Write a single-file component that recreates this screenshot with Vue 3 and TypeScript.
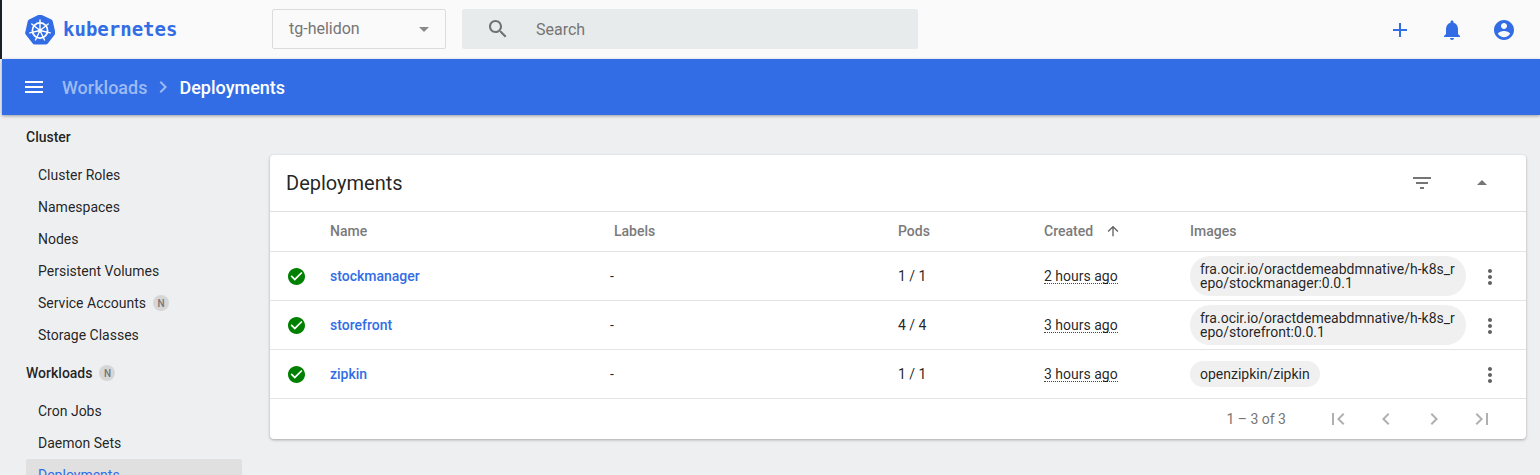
<script setup lang="ts">
interface Row { name: string; pods: string; age: string; image: string }
const cluster: { label: string; badge?: boolean }[] = [
  { label: 'Cluster Roles' }, { label: 'Namespaces' }, { label: 'Nodes' },
  { label: 'Persistent Volumes' }, { label: 'Service Accounts', badge: true }, { label: 'Storage Classes' },
]
const workloads = ['Cron Jobs', 'Daemon Sets']
const rows: Row[] = [
  { name: 'stockmanager', pods: '1 / 1', age: '2 hours ago', image: 'fra.ocir.io/oractdemeabdmnative/h-k8s_repo/stockmanager:0.0.1' },
  { name: 'storefront', pods: '4 / 4', age: '3 hours ago', image: 'fra.ocir.io/oractdemeabdmnative/h-k8s_repo/storefront:0.0.1' },
  { name: 'zipkin', pods: '1 / 1', age: '3 hours ago', image: 'openzipkin/zipkin' },
]
const pager = [
  'M18.41 16.59L13.82 12l4.59-4.59L17 6l-6 6 6 6zM6 6h2v12H6z',
  'M15.41 7.41L14 6l-6 6 6 6 1.41-1.41L10.83 12z',
  'M10 6L8.59 7.41 13.17 12l-4.58 4.59L10 18l6-6z',
  'M5.59 7.41L10.18 12l-4.59 4.59L7 18l6-6-6-6zM16 6h2v12h-2z',
]
const spokes = [0, 51.4, 102.8, 154.3, 205.7, 257.1, 308.6]
</script>

<template>
  <div class="page">
    <header class="toolbar">
      <div class="brand">
        <svg class="logo" width="30" height="30" viewBox="0 0 30 30">
          <path d="M15 .4a2.6 2.6 0 0 1 1.2.3l10.2 4.9a2.6 2.6 0 0 1 1.4 1.8l2.5 11a2.6 2.6 0 0 1-.5 2.2l-7 8.8a2.6 2.6 0 0 1-2 1H9.7a2.6 2.6 0 0 1-2-1l-7-8.8a2.6 2.6 0 0 1-.5-2.2l2.5-11a2.6 2.6 0 0 1 1.4-1.8L13.8.7A2.6 2.6 0 0 1 15 .4z" fill="#326de6" transform="translate(0 -1)" />
          <circle cx="15" cy="15.5" r="7.6" fill="none" stroke="#fff" stroke-width="1.7" />
          <circle cx="15" cy="15.5" r="1.9" fill="#fff" />
          <g stroke="#fff" stroke-width="1.4" stroke-linecap="round">
            <line v-for="a in spokes" :key="a" x1="15" y1="15.5" x2="15" y2="5" :transform="`rotate(${a} 15 15.5)`" />
          </g>
        </svg>
        <span class="wordmark">kubernetes</span>
      </div>
      <div class="select">
        <span>tg-helidon</span>
        <svg width="24" height="24" viewBox="0 0 24 24"><path d="M7 10l5 5 5-5z" fill="#8a8a8a" /></svg>
      </div>
      <div class="search">
        <svg width="24" height="24" viewBox="0 0 24 24"><path d="M15.5 14h-.79l-.28-.27C15.41 12.59 16 11.11 16 9.5 16 5.91 13.09 3 9.5 3S3 5.91 3 9.5 5.91 16 9.5 16c1.61 0 3.09-.59 4.23-1.57l.27.28v.79l5 4.99L20.49 19l-4.99-5zm-6 0C7.01 14 5 11.99 5 9.5S7.01 5 9.5 5 14 7.01 14 9.5 11.99 14 9.5 14z" fill="#6f7172" /></svg>
        <span>Search</span>
      </div>
      <div class="actions">
        <svg width="24" height="24" viewBox="0 0 24 24"><path d="M19 13h-6v6h-2v-6H5v-2h6V5h2v6h6v2z" /></svg>
        <svg width="24" height="24" viewBox="0 0 24 24"><path d="M12 22c1.1 0 2-.9 2-2h-4c0 1.1.89 2 2 2zm6-6v-5c0-3.07-1.64-5.64-4.5-6.32V4c0-.83-.67-1.5-1.5-1.5s-1.5.67-1.5 1.5v.68C7.63 5.36 6 7.92 6 11v5l-2 2v1h16v-1l-2-2z" /></svg>
        <svg width="24" height="24" viewBox="0 0 24 24"><path d="M12 2C6.48 2 2 6.48 2 12s4.48 10 10 10 10-4.48 10-10S17.52 2 12 2zm0 3c1.66 0 3 1.34 3 3s-1.34 3-3 3-3-1.34-3-3 1.34-3 3-3zm0 14.2c-2.5 0-4.71-1.28-6-3.22.03-1.99 4-3.08 6-3.08 1.99 0 5.97 1.09 6 3.08-1.29 1.94-3.5 3.22-6 3.22z" /></svg>
      </div>
    </header>

    <div class="bar">
      <svg width="24" height="24" viewBox="0 0 24 24"><path d="M3 18h18v-2H3v2zm0-5h18v-2H3v2zm0-7v2h18V6H3z" fill="#fff" /></svg>
      <span class="crumb">Workloads</span>
      <svg class="sep" width="24" height="24" viewBox="0 0 24 24"><path d="M10 6L8.59 7.41 13.17 12l-4.58 4.59L10 18l6-6z" fill="#9dbaf3" /></svg>
      <span class="current">Deployments</span>
    </div>

    <div class="main">
      <nav class="side">
        <div class="group first">Cluster</div>
        <div v-for="c in cluster" :key="c.label" class="item">
          {{ c.label }}<span v-if="c.badge" class="badge">N</span>
        </div>
        <div class="group">Workloads<span class="badge">N</span></div>
        <div v-for="w in workloads" :key="w" class="item">{{ w }}</div>
        <div class="item active">Deployments</div>
      </nav>

      <section class="card">
        <div class="card-head">
          <span class="card-title">Deployments</span>
          <svg class="filter" width="24" height="24" viewBox="0 0 24 24"><path d="M10 18h4v-2h-4v2zM3 6v2h18V6H3zm3 7h12v-2H6v2z" /></svg>
          <svg class="collapse" width="24" height="24" viewBox="0 0 24 24"><path d="M7 14l5-5 5 5z" /></svg>
        </div>
        <div class="grid head">
          <span></span>
          <span>Name</span>
          <span>Labels</span>
          <span>Pods</span>
          <span class="created">Created
            <svg width="16" height="16" viewBox="0 0 24 24"><path d="M4 12l1.41 1.41L11 7.83V20h2V7.83l5.58 5.59L20 12l-8-8-8 8z" /></svg>
          </span>
          <span>Images</span>
          <span></span>
        </div>
        <div v-for="r in rows" :key="r.name" class="grid row">
          <svg class="ok" width="17" height="17" viewBox="2 2 20 20"><path d="M12 2C6.48 2 2 6.48 2 12s4.48 10 10 10 10-4.48 10-10S17.52 2 12 2zm-2 15l-5-5 1.41-1.41L10 14.17l7.59-7.59L19 8l-9 9z" /></svg>
          <a class="name">{{ r.name }}</a>
          <span class="dash">-</span>
          <span>{{ r.pods }}</span>
          <span><span class="age">{{ r.age }}</span></span>
          <span class="chip-cell"><span class="chip">{{ r.image }}</span></span>
          <svg class="kebab" width="24" height="24" viewBox="0 0 24 24"><path d="M12 8c1.1 0 2-.9 2-2s-.9-2-2-2-2 .9-2 2 .9 2 2 2zm0 2c-1.1 0-2 .9-2 2s.9 2 2 2 2-.9 2-2-.9-2-2-2zm0 6c-1.1 0-2 .9-2 2s.9 2 2 2 2-.9 2-2-.9-2-2-2z" /></svg>
        </div>
        <div class="foot">
          <span class="range">1 – 3 of 3</span>
          <svg v-for="p in pager" :key="p" width="24" height="24" viewBox="0 0 24 24"><path :d="p" /></svg>
        </div>
      </section>
    </div>
  </div>
</template>

<style>
html, body { margin: 0; background: #eeeff1; }
</style>

<style scoped>
.page {
  width: 1540px; height: 475px; overflow: hidden; display: flex; flex-direction: column;
  background: #eeeff1; font-family: Roboto, "Liberation Sans", sans-serif; font-size: 14px; color: rgba(0,0,0,.87);
  box-sizing: border-box;
}
.toolbar {
  height: 59px; flex: none; box-sizing: border-box; display: flex; align-items: center;
  background: #fafafa; border-left: 2px solid #1b2024; padding: 0 0 2px 23px;
}
.brand { display: flex; align-items: center; width: 247px; margin-top: 2px; }
.logo { flex: none; }
.wordmark {
  margin-left: 8px; font-family: "DejaVu Sans Mono", monospace; font-weight: 700; font-size: 19px; color: #326de6;
  margin-top: -1px;
}
.select {
  width: 174px; height: 40px; box-sizing: border-box; border: 1px solid #dcdcdc; border-radius: 2px;
  display: flex; align-items: center; justify-content: space-between; padding: 0 9px 0 16px;
  color: #757575; font-size: 16px; background: #fafafa;
}
.search {
  margin-left: 16px; width: 456px; height: 40px; background: #e8ebeb; border-radius: 2px;
  display: flex; align-items: center; padding-left: 24px; box-sizing: border-box; color: #757575; font-size: 16px;
}
.search span { margin: 1px 0 0 26px; }
.actions { margin-left: auto; margin-top: 2px; display: flex; gap: 28px; padding-right: 24px; fill: #326de6; }

.bar {
  height: 56px; flex: none; margin-left: 2px; display: flex; align-items: center; padding-left: 20px;
  background: #326de6; color: #fff; font-weight: 500; font-size: 18px;
  box-shadow: 0 1px 3px rgba(0,0,0,.35); position: relative; z-index: 1;
}
.crumb { margin-left: 16px; color: #9dbaf3; }
.sep { margin: 0 4px; }

.main { flex: 1; display: flex; min-height: 0; }
.side { width: 270px; flex: none; box-sizing: border-box; padding-left: 26px; }
.group {
  font-weight: 500; height: 36px; display: flex; align-items: center; margin: 2px 0 6px; padding-top: 4px; box-sizing: border-box;
}
.item { height: 32px; display: flex; align-items: center; padding-left: 12px; width: 216px; box-sizing: border-box; }
.badge {
  width: 16px; height: 16px; border-radius: 50%; background: #d6d6d6; color: #757575; font-size: 10px; font-weight: 500;
  display: inline-flex; align-items: center; justify-content: center; margin-left: 7px;
}
.active { background: #e0e0e0; color: #326de6; border-radius: 2px; }

.card {
  width: 1256px; height: 284px; margin-top: 40px; background: #fff; border-radius: 4px; flex: none;
  box-shadow: 0 1px 3px rgba(0,0,0,.3); overflow: hidden;
}
.card-head {
  height: 57px; box-sizing: border-box; border-bottom: 1px solid #dfdfdf; display: flex; align-items: center;
  padding-left: 16px; fill: #757575;
}
.card-title { font-size: 20px; flex: 1; }
.filter { margin-right: 36px; }
.collapse { margin-right: 32px; }
.grid {
  display: grid; grid-template-columns: 60px 284px 284px 146px 146px 276px 48px; align-items: center;
  border-bottom: 1px solid #e4e4e4;
}
.head { height: 40px; box-sizing: border-box; padding-bottom: 2px; color: #7a7a7a; font-size: 14px; font-weight: 500; }
.created { display: flex; align-items: center; gap: 12px; fill: #616161; }
.row { height: 49px; box-sizing: border-box; color: rgba(0,0,0,.87); }
.ok { fill: #008000; margin-left: 17.5px; margin-top: 1px; }
.name { color: #326de6; font-weight: 500; }
.dash { margin-left: -4px; }
.age { border-bottom: 1px dotted #444; line-height: 13px; display: inline-block; }
.chip-cell { display: flex; }
.chip {
  background: #f0f0f0; border-radius: 20px; padding: 6px 10px; line-height: 14px; word-break: break-all; box-sizing: border-box;
  max-width: 276px;
}
.kebab { fill: #616161; justify-self: center; margin-top: 1px; }
.foot {
  height: 40px; display: flex; align-items: center; justify-content: flex-end; padding-right: 32px; gap: 24px;
  fill: #b0b0b0; color: #757575; font-size: 14px;
}
.range { margin-right: 16px; }
</style>
